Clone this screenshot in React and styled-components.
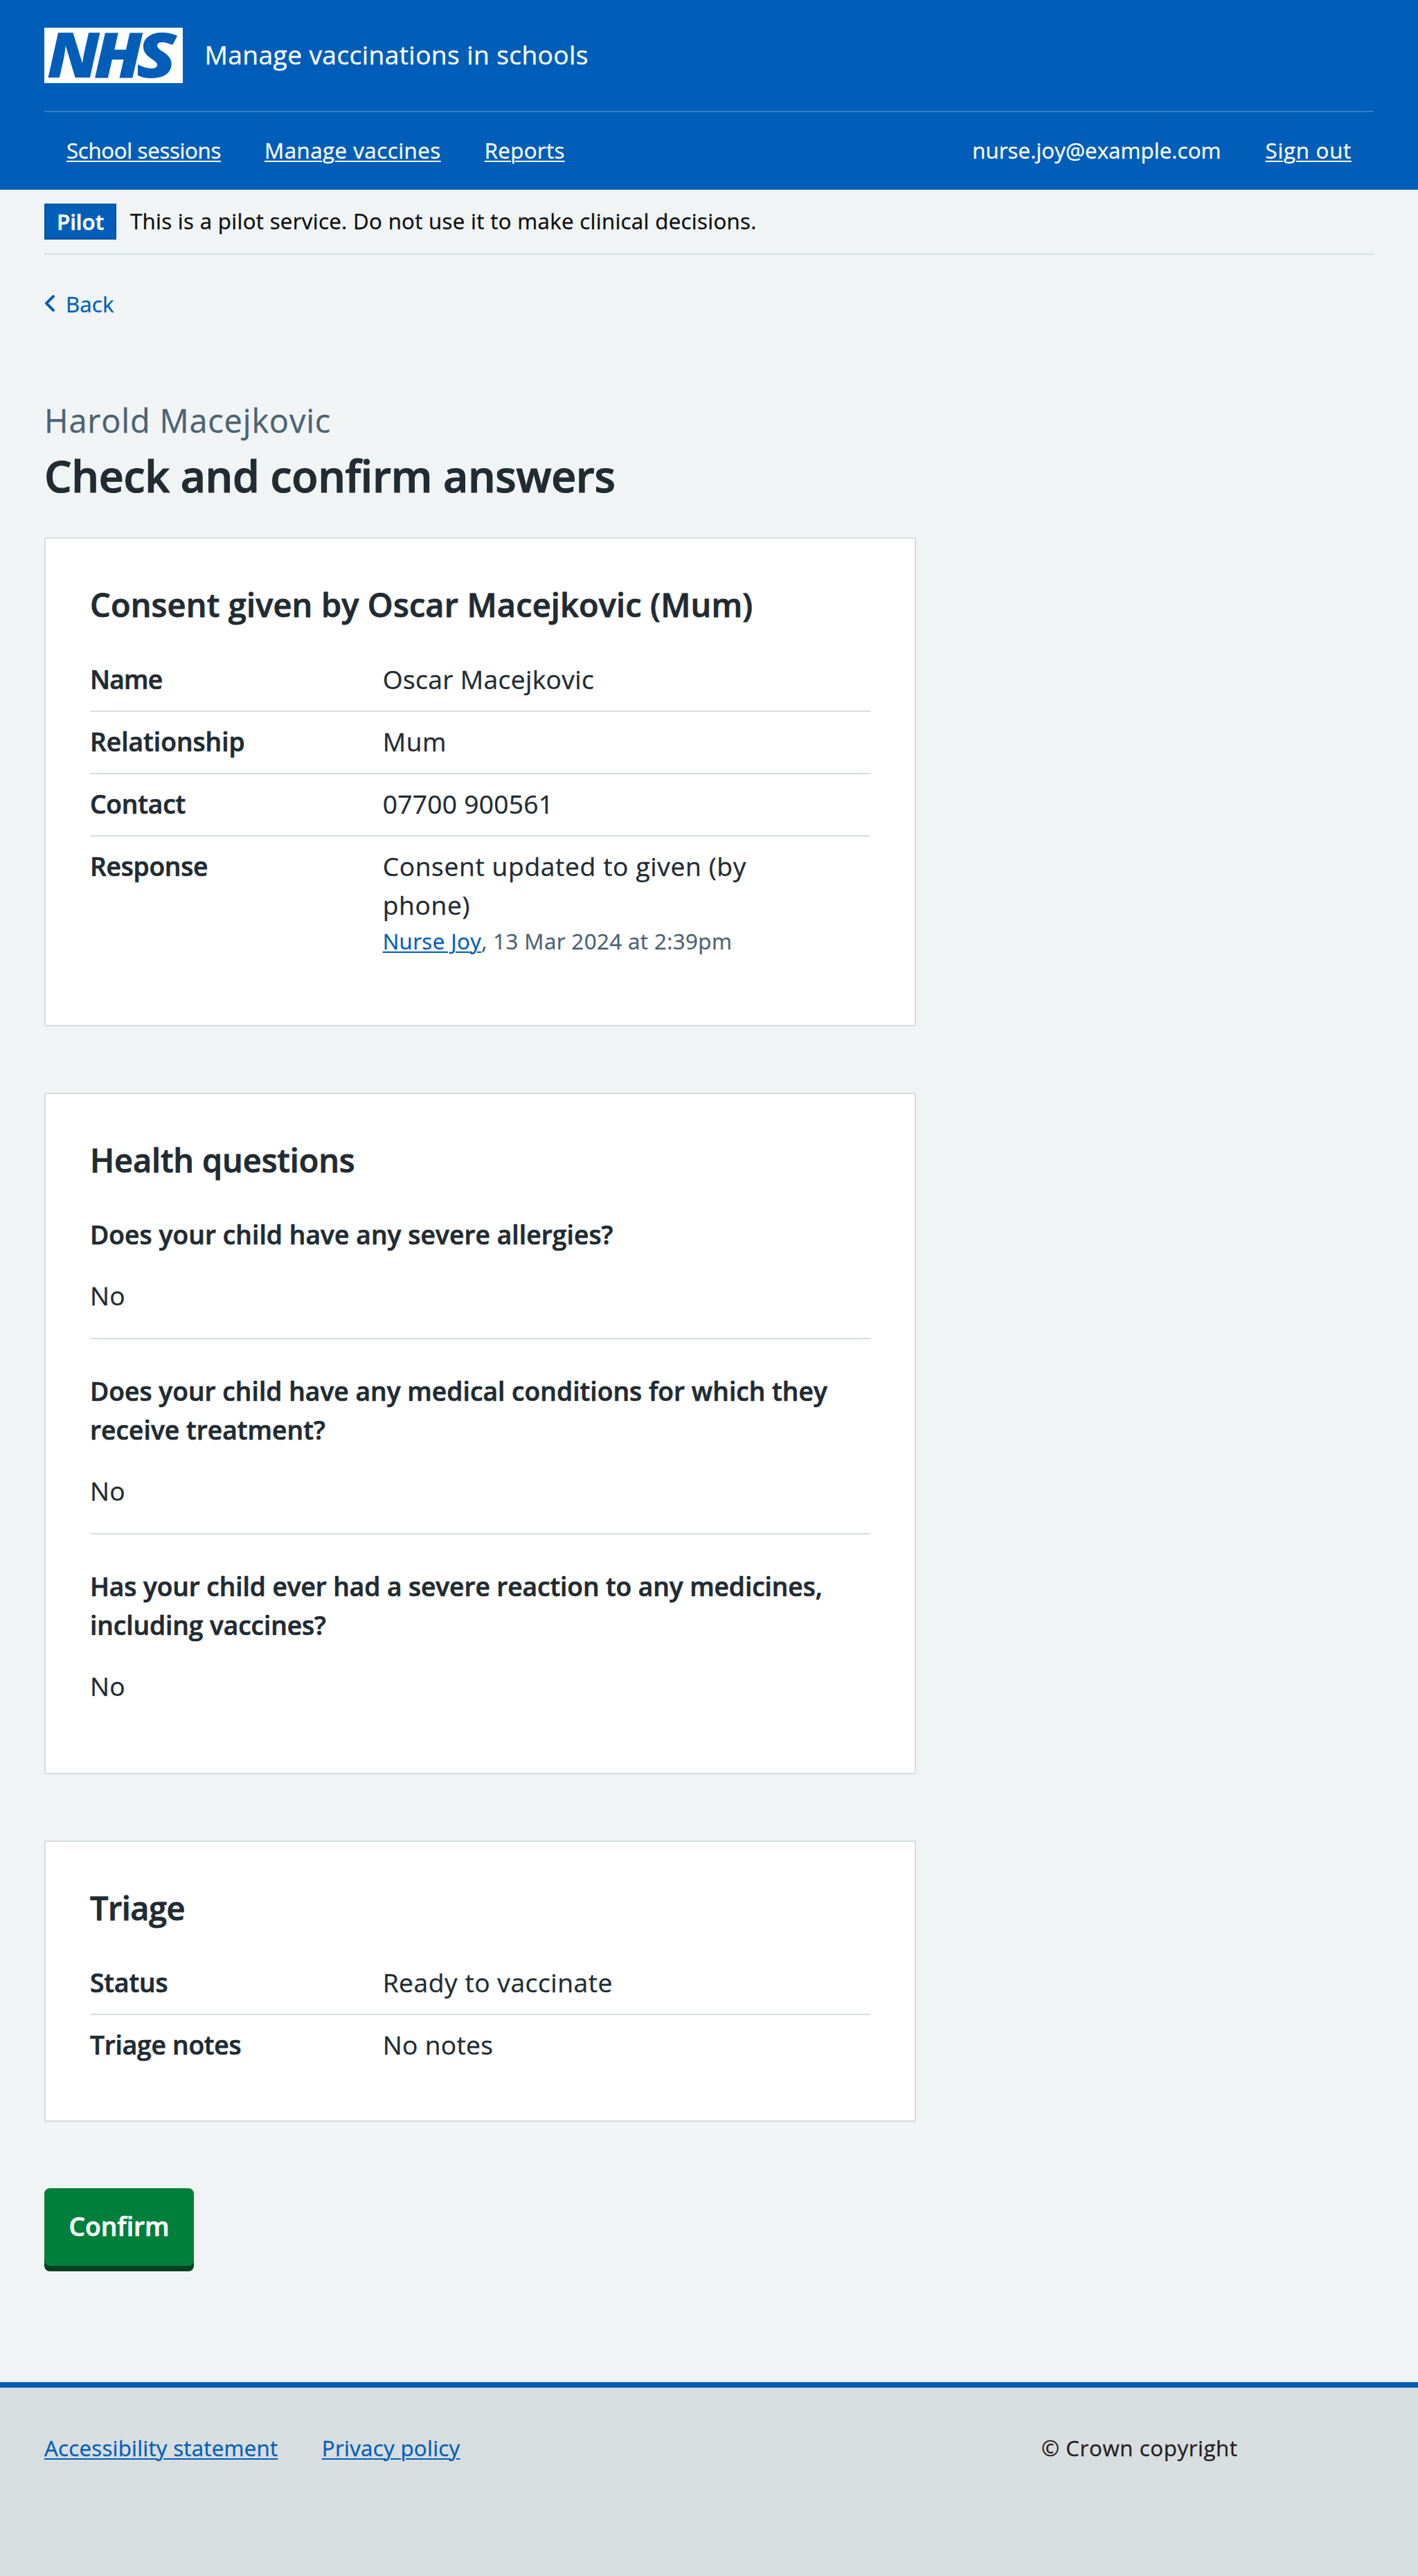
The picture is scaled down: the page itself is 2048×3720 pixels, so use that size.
import React from "react";
import styled, { createGlobalStyle, css } from "styled-components";

const color = {
  blue: "#005eb8",
  page: "#f0f4f5",
  border: "#d8dde0",
  text: "#212b32",
  secondary: "#4c6272",
  green: "#007f3b",
  greenShadow: "#00401e",
};

const GlobalStyle = createGlobalStyle`
  *, *::before, *::after { box-sizing: border-box; }
  body {
    margin: 0;
    background: ${color.page};
    color: ${color.text};
    font-family: "Open Sans", "Noto Sans", sans-serif;
    font-size: 37.2px;
    line-height: 56px;
    font-variant-ligatures: none;
    -webkit-text-stroke-width: 0.3px;
  }
  h1, h2, p, dl, dt, dd { margin: 0; }
`;

const tracked = css`
  letter-spacing: ${(p) => p.$track || 0}em;
`;

const smallText = css`
  font-size: 31.3px;
  line-height: 48px;
`;

const bold = css`
  font-weight: 600;
  -webkit-text-stroke-width: 0.018em;
`;

const Link = styled.a`
  ${tracked}
  color: ${(p) => (p.$light ? "#fff" : color.blue)};
  text-decoration: underline;
  text-decoration-thickness: 2px;
  text-underline-offset: 3px;
  white-space: nowrap;
`;

/* Header */
const Header = styled.header`
  height: 274px;
  padding: 0 64px;
  background: ${color.blue};
  color: #fff;
`;

const Masthead = styled.div`
  display: flex;
  align-items: center;
  gap: 31.5px;
  height: 162px;
  border-bottom: 2px solid rgba(255, 255, 255, 0.2);
`;

const Logo = styled.svg`
  display: block;
  width: 200px;
  height: 80px;
  overflow: visible;
  background: #fff;
`;

const LogoLetter = styled.text`
  font: italic 800 91px "Open Sans", sans-serif;
  fill: ${color.blue};
`;

const ServiceName = styled.span`
  padding-bottom: 3px;
  letter-spacing: 0.01em;
`;

const Nav = styled.nav`
  ${smallText}
  display: flex;
  justify-content: space-between;
  align-items: center;
  height: 112px;
  padding: 0 32px 2px;
`;

const NavGroup = styled.div`
  display: flex;
  gap: ${(p) => p.$gap}px;
`;

const Account = styled.span`
  letter-spacing: 0.0015em;
`;

/* Phase banner */
const Banner = styled.div`
  ${smallText}
  display: flex;
  align-items: center;
  gap: 20px;
  height: 94px;
  margin: 0 64px;
  border-bottom: 2px solid ${color.border};
  color: #0b0c0c;
`;

const Tag = styled.strong`
  ${bold}
  display: flex;
  align-items: center;
  justify-content: center;
  width: 104px;
  height: 52px;
  border: 2px solid #0053a3;
  background: ${color.blue};
  color: #fff;
`;

const BannerText = styled.p`
  padding-bottom: 2px;
  letter-spacing: 0.0095em;
`;

/* Main column */
const Main = styled.main`
  padding: 43px 64px 168px;
`;

const BackLink = styled.a`
  ${smallText}
  display: flex;
  align-items: center;
  height: 56px;
  margin-left: -16px;
  color: ${color.blue};
  letter-spacing: 0.004em;
`;

const BackIcon = styled.svg`
  width: 48px;
  height: 48px;
  margin: -2px -1px 0 0;
  fill: ${color.blue};
`;

const Column = styled.div`
  display: flex;
  flex-direction: column;
  width: 1259px;
`;

const Caption = styled.p`
  margin-top: 110px;
  color: ${color.secondary};
  font-size: 46.9px;
  line-height: 60px;
  letter-spacing: 0.0175em;
`;

const Title = styled.h1`
  ${bold}
  margin: 10px 0 49px;
  font-size: 62.6px;
  line-height: 80px;
  letter-spacing: -0.0055em;
`;

const Card = styled.section`
  margin-bottom: 96px;
  padding: 63px 64px 64px;
  border: 2px solid ${color.border};
  background: #fff;
`;

const CardTitle = styled.h2`
  ${bold}
  ${tracked}
  margin-bottom: 33px;
  font-size: 46.9px;
  line-height: 64px;
`;

const SummaryRow = styled.div`
  display: grid;
  grid-template-columns: 37.5% 50%;
  padding: 15px 0 17px;

  &:not(:last-child) {
    border-bottom: 2px solid ${color.border};
  }
`;

const Key = styled.dt`
  ${bold}
  ${tracked}
`;

const Value = styled.dd`
  ${tracked}
`;

const Meta = styled.p`
  ${smallText}
  margin-bottom: 16px;
  color: ${color.secondary};
  letter-spacing: 0.0125em;
`;

const Question = styled.div`
  display: flex;
  flex-direction: column;
  gap: 32px;
  padding: 47px 0 33px;

  &:first-child {
    padding-top: 15px;
  }

  &:not(:last-child) {
    border-bottom: 2px solid ${color.border};
  }
`;

const ConfirmButton = styled.button`
  width: 216px;
  height: 112px;
  padding: 0 0 3px;
  border: 0;
  border-radius: 8px;
  background: ${color.green};
  box-shadow: 0 8px 0 ${color.greenShadow};
  color: #fff;
  font: inherit;
  letter-spacing: -0.001em;
  ${bold}
`;

/* Footer */
const Footer = styled.footer`
  ${smallText}
  display: flex;
  justify-content: space-between;
  height: 280px;
  padding: 63px 64px 0;
  border-top: 8px solid ${color.blue};
  background: ${color.border};
`;

const Copyright = styled.p`
  width: 480px;
  color: #231f20;
  letter-spacing: 0.0185em;
`;

const logoLetters = [
  { char: "N", x: 4.1, stretch: 1.056 },
  { char: "H", x: 71.6, stretch: 1.08 },
  { char: "S", x: 132.7, stretch: 1.17 },
];

const consentRows = [
  { key: "Name", keyTrack: -0.022, value: "Oscar Macejkovic", track: 0.0095 },
  { key: "Relationship", keyTrack: 0, value: "Mum", track: 0.015 },
  { key: "Contact", keyTrack: -0.0055, value: "07700 900561", track: 0.007 },
  {
    key: "Response",
    keyTrack: -0.007,
    value: "Consent updated to given (by phone)",
    track: 0.017,
    by: "Nurse Joy",
    at: ", 13 Mar 2024 at 2:39pm",
  },
];

const questions = [
  { text: "Does your child have any severe allergies?", track: 0.0018, answer: "No" },
  {
    text: "Does your child have any medical conditions for which they receive treatment?",
    track: 0.0008,
    answer: "No",
  },
  {
    text: "Has your child ever had a severe reaction to any medicines, including vaccines?",
    track: -0.0026,
    answer: "No",
  },
];

const triageRows = [
  { key: "Status", keyTrack: -0.003, value: "Ready to vaccinate", track: 0.0145 },
  { key: "Triage notes", keyTrack: -0.0065, value: "No notes", track: 0.009 },
];

function SummaryList({ rows }) {
  return (
    <dl>
      {rows.map((row) => (
        <SummaryRow key={row.key}>
          <Key $track={row.keyTrack}>{row.key}</Key>
          <Value $track={row.track}>
            {row.value}
            {row.by && (
              <Meta>
                <Link $track={0.0125}>{row.by}</Link>
                {row.at}
              </Meta>
            )}
          </Value>
        </SummaryRow>
      ))}
    </dl>
  );
}

export default function App() {
  return (
    <>
      <GlobalStyle />
      <Header>
        <Masthead>
          <Logo viewBox="0 0 200 80" role="img" aria-label="NHS">
            {logoLetters.map(({ char, x, stretch }) => (
              <LogoLetter key={char} transform={`translate(${x} 72.3) scale(${stretch} 1)`}>
                {char}
              </LogoLetter>
            ))}
          </Logo>
          <ServiceName>Manage vaccinations in schools</ServiceName>
        </Masthead>
        <Nav>
          <NavGroup $gap={63}>
            <Link $light $track={-0.011}>School sessions</Link>
            <Link $light $track={0.0155}>Manage vaccines</Link>
            <Link $light $track={0.01}>Reports</Link>
          </NavGroup>
          <NavGroup $gap={64}>
            <Account>nurse.joy@example.com</Account>
            <Link $light $track={0.0235}>Sign out</Link>
          </NavGroup>
        </Nav>
      </Header>

      <Banner>
        <Tag>Pilot</Tag>
        <BannerText>
          This is a pilot service. Do not use it to make clinical decisions.
        </BannerText>
      </Banner>

      <Main>
        <BackLink>
          <BackIcon viewBox="0 0 24 24" aria-hidden="true">
            <path d="M8.5 12c0-.3.1-.5.3-.7l5-5c.4-.4 1-.4 1.4 0s.4 1 0 1.4L10.9 12l4.3 4.3c.4.4.4 1 0 1.4s-1 .4-1.4 0l-5-5c-.2-.2-.3-.4-.3-.7z" />
          </BackIcon>
          Back
        </BackLink>

        <Column>
          <Caption>Harold Macejkovic</Caption>
          <Title>Check and confirm answers</Title>

          <Card>
            <CardTitle $track={0.0035}>Consent given by Oscar Macejkovic (Mum)</CardTitle>
            <SummaryList rows={consentRows} />
          </Card>

          <Card>
            <CardTitle $track={-0.003}>Health questions</CardTitle>
            <dl>
              {questions.map((q) => (
                <Question key={q.text}>
                  <Key $track={q.track}>{q.text}</Key>
                  <Value $track={0.008}>{q.answer}</Value>
                </Question>
              ))}
            </dl>
          </Card>

          <Card>
            <CardTitle $track={-0.011}>Triage</CardTitle>
            <SummaryList rows={triageRows} />
          </Card>
        </Column>

        <ConfirmButton type="button">Confirm</ConfirmButton>
      </Main>

      <Footer>
        <NavGroup $gap={63.5}>
          <Link $track={0.0074}>Accessibility statement</Link>
          <Link $track={0.009}>Privacy policy</Link>
        </NavGroup>
        <Copyright>© Crown copyright</Copyright>
      </Footer>
    </>
  );
}
